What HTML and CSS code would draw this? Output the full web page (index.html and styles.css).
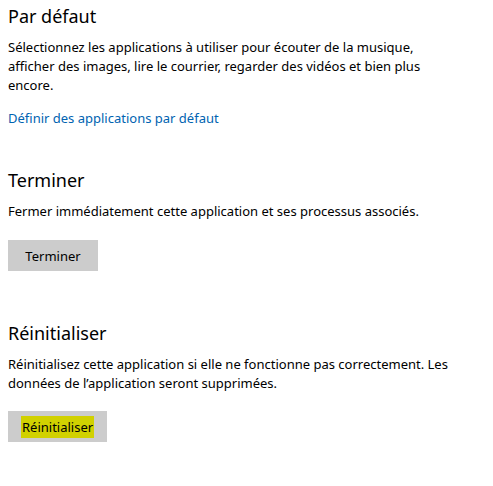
FILE: index.html
```html
<!DOCTYPE html>
<html lang="fr">
<head>
<meta charset="utf-8">
<link rel="stylesheet" href="styles.css">
</head>
<body>
<section class="sec sec-default">
  <h2 class="title">Par défaut</h2>
  <p class="desc">Sélectionnez les applications à utiliser pour écouter de la musique,<br>afficher des images, lire le courrier, regarder des vidéos et bien plus<br>encore.</p>
  <a class="link" href="#">Définir des applications par défaut</a>
</section>
<section class="sec sec-terminate">
  <h2 class="title">Terminer</h2>
  <p class="desc">Fermer immédiatement cette application et ses processus associés.</p>
  <button class="btn">Terminer</button>
</section>
<section class="sec sec-reset">
  <h2 class="title">Réinitialiser</h2>
  <p class="desc">Réinitialisez cette application si elle ne fonctionne pas correctement. Les<br>données de l’application seront supprimées.</p>
  <button class="btn"><span class="hl">Réinitialiser</span></button>
</section>
</body>
</html>
```
FILE: styles.css
```css
html, body {
  background: #ffffff;
}
body {
  margin: 0;
  padding: 6px 8px 0 8px;
  font-family: "Noto Sans", "Open Sans", sans-serif;
  color: #000000;
}
.sec {
  display: flex;
  flex-direction: column;
  align-items: flex-start;
}
.title {
  margin: 0 0 12px 0;
  font-size: 18px;
  line-height: 20px;
  font-weight: 400;
  color: #000000;
}
.desc {
  margin: 0;
  font-size: 13px;
  line-height: 19px;
  white-space: nowrap;
}
.link {
  margin-top: 14px;
  font-size: 13px;
  line-height: 19px;
  color: #0063b1;
  text-decoration: none;
}
.sec-terminate {
  margin-top: 42px;
}
.sec-reset {
  margin-top: 52px;
}
.sec-terminate .btn {
  margin-top: 19px;
}
.sec-reset .btn {
  margin-top: 18px;
}
.btn {
  min-width: 90px;
  height: 31px;
  padding: 0 13px;
  border: none;
  border-radius: 0;
  background: #cccccc;
  font-family: inherit;
  font-size: 13px;
  color: #000000;
  display: flex;
  align-items: center;
  justify-content: center;
}
.hl {
  background: #d1d100;
  padding: 2px 1px;
}
```
